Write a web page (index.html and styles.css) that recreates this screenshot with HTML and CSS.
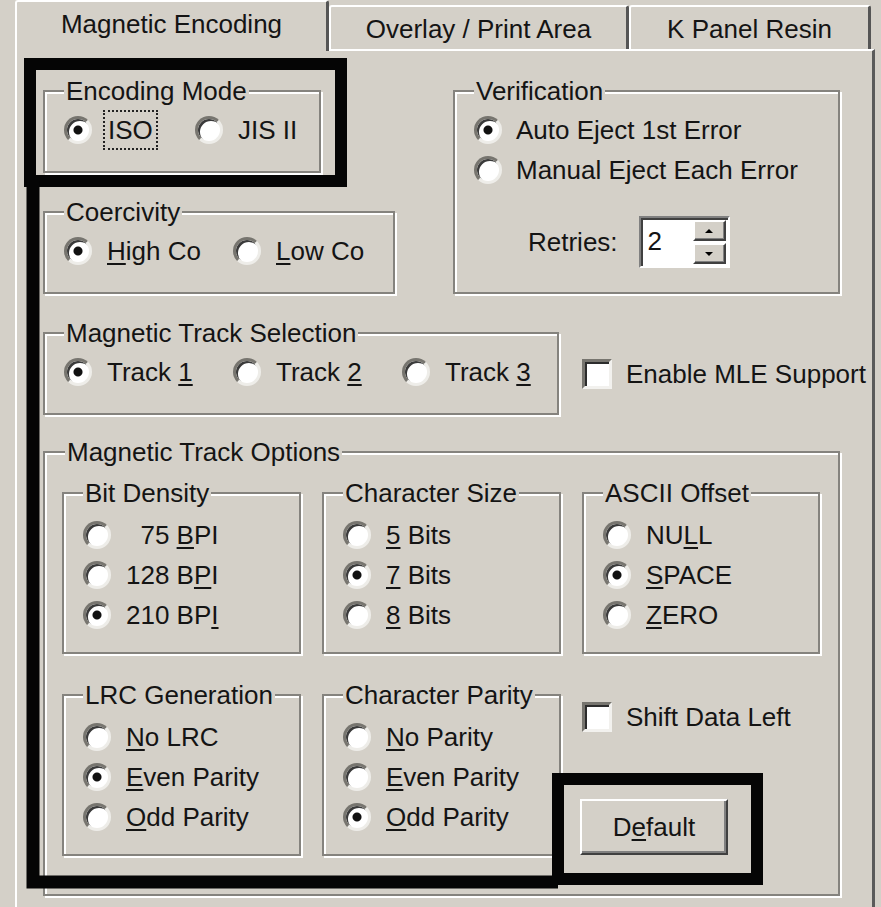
FILE: index.html
```html
<!DOCTYPE html>
<html lang="en">
<head>
    <meta charset="UTF-8">
    <title>Magnetic Encoding</title>
    <link rel="stylesheet" href="styles.css">
</head>
<body>
    <div class="tabs">
        <div class="tab active">Magnetic Encoding</div>
        <div class="tab tab-overlay">Overlay / Print Area</div>
        <div class="tab tab-resin">K Panel Resin</div>
    </div>

    <div class="panel">
        <div class="row-top">
            <div class="col-left">
                <fieldset class="group enc">
                    <legend>Encoding Mode</legend>
                    <div class="choices narrow">
                        <div class="opt"><span class="radio on"></span><span class="focus">ISO</span></div>
                        <div class="opt"><span class="radio"></span><span>JIS II</span></div>
                    </div>
                </fieldset>
                <fieldset class="group coer">
                    <legend>Coercivity</legend>
                    <div class="choices">
                        <div class="opt"><span class="radio on"></span><span><u>H</u>igh Co</span></div>
                        <div class="opt"><span class="radio"></span><span><u>L</u>ow Co</span></div>
                    </div>
                </fieldset>
            </div>

            <fieldset class="group verify">
                <legend>Verification</legend>
                <div class="opt tight"><span class="radio on"></span><span>Auto Eject 1st Error</span></div>
                <div class="opt tight"><span class="radio"></span><span>Manual Eject Each Error</span></div>
                <div class="retries">
                    <span>Retries:</span>
                    <div class="spin">
                        <div class="spin-value">2</div>
                        <div class="spin-btns">
                            <div class="spin-btn"><span class="arrow-up"></span></div>
                            <div class="spin-btn"><span class="arrow-down"></span></div>
                        </div>
                    </div>
                </div>
            </fieldset>
        </div>

        <div class="row-tracks">
            <fieldset class="group tracks">
                <legend>Magnetic Track Selection</legend>
                <div class="choices">
                    <div class="opt"><span class="radio on"></span><span>Track <u>1</u></span></div>
                    <div class="opt"><span class="radio"></span><span>Track <u>2</u></span></div>
                    <div class="opt"><span class="radio"></span><span>Track <u>3</u></span></div>
                </div>
            </fieldset>
            <div class="check mle"><span class="box"></span><span>Enable MLE Support</span></div>
        </div>

        <fieldset class="group options">
            <legend>Magnetic Track Options</legend>
            <div class="options-grid">
                <fieldset class="group sub">
                    <legend>Bit Density</legend>
                    <div class="opt"><span class="radio"></span><span>&nbsp;&nbsp;75 <u>B</u>PI</span></div>
                    <div class="opt"><span class="radio"></span><span>128 B<u>P</u>I</span></div>
                    <div class="opt"><span class="radio on"></span><span>210 BP<u>I</u></span></div>
                </fieldset>
                <fieldset class="group sub">
                    <legend>Character Size</legend>
                    <div class="opt"><span class="radio"></span><span><u>5</u> Bits</span></div>
                    <div class="opt"><span class="radio on"></span><span><u>7</u> Bits</span></div>
                    <div class="opt"><span class="radio"></span><span><u>8</u> Bits</span></div>
                </fieldset>
                <fieldset class="group sub">
                    <legend>ASCII Offset</legend>
                    <div class="opt"><span class="radio"></span><span>NU<u>L</u>L</span></div>
                    <div class="opt"><span class="radio on"></span><span><u>S</u>PACE</span></div>
                    <div class="opt"><span class="radio"></span><span><u>Z</u>ERO</span></div>
                </fieldset>
                <fieldset class="group sub">
                    <legend>LRC Generation</legend>
                    <div class="opt"><span class="radio"></span><span><u>N</u>o LRC</span></div>
                    <div class="opt"><span class="radio on"></span><span><u>E</u>ven Parity</span></div>
                    <div class="opt"><span class="radio"></span><span><u>O</u>dd Parity</span></div>
                </fieldset>
                <fieldset class="group sub">
                    <legend>Character Parity</legend>
                    <div class="opt"><span class="radio"></span><span><u>N</u>o Parity</span></div>
                    <div class="opt"><span class="radio"></span><span><u>E</u>ven Parity</span></div>
                    <div class="opt"><span class="radio on"></span><span><u>O</u>dd Parity</span></div>
                </fieldset>
                <div class="side">
                    <div class="check shift"><span class="box"></span><span>Shift Data Left</span></div>
                    <button class="btn">D<u>e</u>fault</button>
                </div>
            </div>
        </fieldset>
    </div>

    <!-- annotation marks drawn over the dialog -->
    <svg class="marks" width="881" height="907" viewBox="0 0 881 907">
        <g fill="none" stroke="#050505" stroke-width="12">
            <rect x="30" y="64" width="311" height="117"/>
            <path d="M33 181 V882 H558" stroke-width="13"/>
            <rect x="558" y="779" width="199" height="100"/>
        </g>
    </svg>
</body>
</html>
```

FILE: styles.css
```css
* {
    box-sizing: border-box;
}
body {
    margin: 0;
    height: 907px;
    overflow: hidden;
    position: relative;
    background: #d4d0c8;
    font-family: "Liberation Sans", Arial, sans-serif;
    font-size: 26px;
    line-height: 30px;
    color: #141414;
}
u {
    text-decoration-thickness: 2px;
    text-underline-offset: 3px;
}

/* tab strip */
.tabs {
    display: flex;
    align-items: flex-end;
    height: 51px;
    margin-left: 15px;
    position: relative;
    z-index: 1;
}
.tab {
    height: 44px;
    margin-bottom: 2px;
    padding-top: 7px;
    text-align: center;
    white-space: nowrap;
    background: #d4d0c8;
    border-top: 2px solid #fff;
    border-left: 2px solid #fff;
    border-right: 3px solid #555;
    border-radius: 3px 3px 0 0;
}
.tab.active {
    width: 314px;
    height: 51px;
    margin-bottom: 0;
}
.tab-overlay {
    width: 300px;
}
.tab-resin {
    width: 242px;
}

/* page body of the dialog */
.panel {
    width: 860px;
    height: 880px;
    margin: -2px 0 0 15px;
    padding: 25px 0 0 26px;
    border-top: 2px solid #fff;
    border-left: 2px solid #fff;
    border-right: 3px solid #5a5a5a;
}

/* etched group boxes */
.group {
    margin: 0;
    min-width: 0;
    padding: 4px 19px 21px;
    border: 2px solid #85837e;
    box-shadow: inset 2px 2px 0 #fff, 2px 2px 0 #fff;
}
.group legend {
    padding: 0 2px;
    line-height: 30px;
    background: #d4d0c8;
    white-space: nowrap;
}

.row-top {
    display: flex;
    align-items: flex-start;
    gap: 58px;
}
.col-left {
    display: flex;
    flex-direction: column;
    gap: 24px;
    width: 352px;
}
.enc {
    width: 278px;
}
.coer {
    width: 352px;
}
.verify {
    width: 387px;
    padding-bottom: 24px;
}

.row-tracks {
    display: flex;
    align-items: flex-start;
    margin-top: 24px;
}
.tracks {
    width: 516px;
}

.options {
    width: 797px;
    margin-top: 22px;
    padding: 11px 17px 38px;
}
.options > legend {
    margin-left: 3px;
}
.options-grid {
    display: grid;
    grid-template-columns: 239px 239px 238px;
    column-gap: 21px;
    row-gap: 26px;
}
.sub {
    padding: 7px 19px 17px;
}

/* radio rows */
.choices {
    display: flex;
}
.choices .opt {
    min-width: 169px;
}
.choices.narrow .opt {
    min-width: 131px;
}
.opt {
    display: flex;
    align-items: center;
    gap: 15px;
    height: 40px;
    white-space: nowrap;
}
.opt.tight {
    gap: 14px;
}
.radio {
    flex: none;
    width: 28px;
    height: 28px;
    border-radius: 50%;
    background: #fff;
    border: 3px solid;
    border-color: #77756f #eeede9 #eeede9 #77756f;
    box-shadow: inset 2px 2px 0 #3a3a3a;
}
.radio.on {
    background: radial-gradient(circle, #111 4px, #fff 5px);
}
.focus {
    margin-left: -4px;
    padding: 3px;
    border: 2px dotted #222;
}

/* checkboxes */
.check {
    display: flex;
    align-items: center;
    gap: 14px;
    white-space: nowrap;
}
.box {
    flex: none;
    width: 30px;
    height: 30px;
    background: #fff;
    border: 3px solid;
    border-color: #77756f #f2f1ee #f2f1ee #77756f;
    box-shadow: inset 2px 2px 0 #2c2c2c;
}
.mle {
    margin: 41px 0 0 23px;
}

/* retries spinner */
.retries {
    display: flex;
    align-items: center;
    gap: 21px;
    margin-top: 26px;
    padding-left: 54px;
}
.spin {
    display: flex;
    width: 91px;
    height: 52px;
    background: #fff;
    border: 2px solid;
    border-color: #808080 #fff #fff #808080;
    box-shadow: inset 2px 2px 0 #404040;
}
.spin-value {
    flex: 1;
    padding: 8px 0 0 7px;
}
.spin-btns {
    display: flex;
    flex-direction: column;
    gap: 2px;
    width: 35px;
    padding: 2px 2px 2px 0;
}
.spin-btn {
    flex: 1;
    display: flex;
    align-items: center;
    justify-content: center;
    background: #d4d0c8;
    border: 2px solid;
    border-color: #fff #404040 #404040 #fff;
    box-shadow: inset -1px -1px 0 #808080;
}
.arrow-up {
    border-left: 4px solid transparent;
    border-right: 4px solid transparent;
    border-bottom: 4px solid #000;
}
.arrow-down {
    border-left: 4px solid transparent;
    border-right: 4px solid transparent;
    border-top: 4px solid #000;
}

/* bottom right cell */
.side {
    display: flex;
    flex-direction: column;
    align-items: flex-start;
}
.shift {
    margin-top: 22px;
}
.btn {
    width: 148px;
    height: 56px;
    margin: 67px 0 0 -2px;
    padding: 0;
    font: inherit;
    color: inherit;
    background: #d4d0c8;
    border: 2px solid;
    border-color: #fff #404040 #404040 #fff;
    box-shadow: inset -2px -2px 0 #808080;
}

.marks {
    position: absolute;
    top: 0;
    left: 0;
    pointer-events: none;
}
```
